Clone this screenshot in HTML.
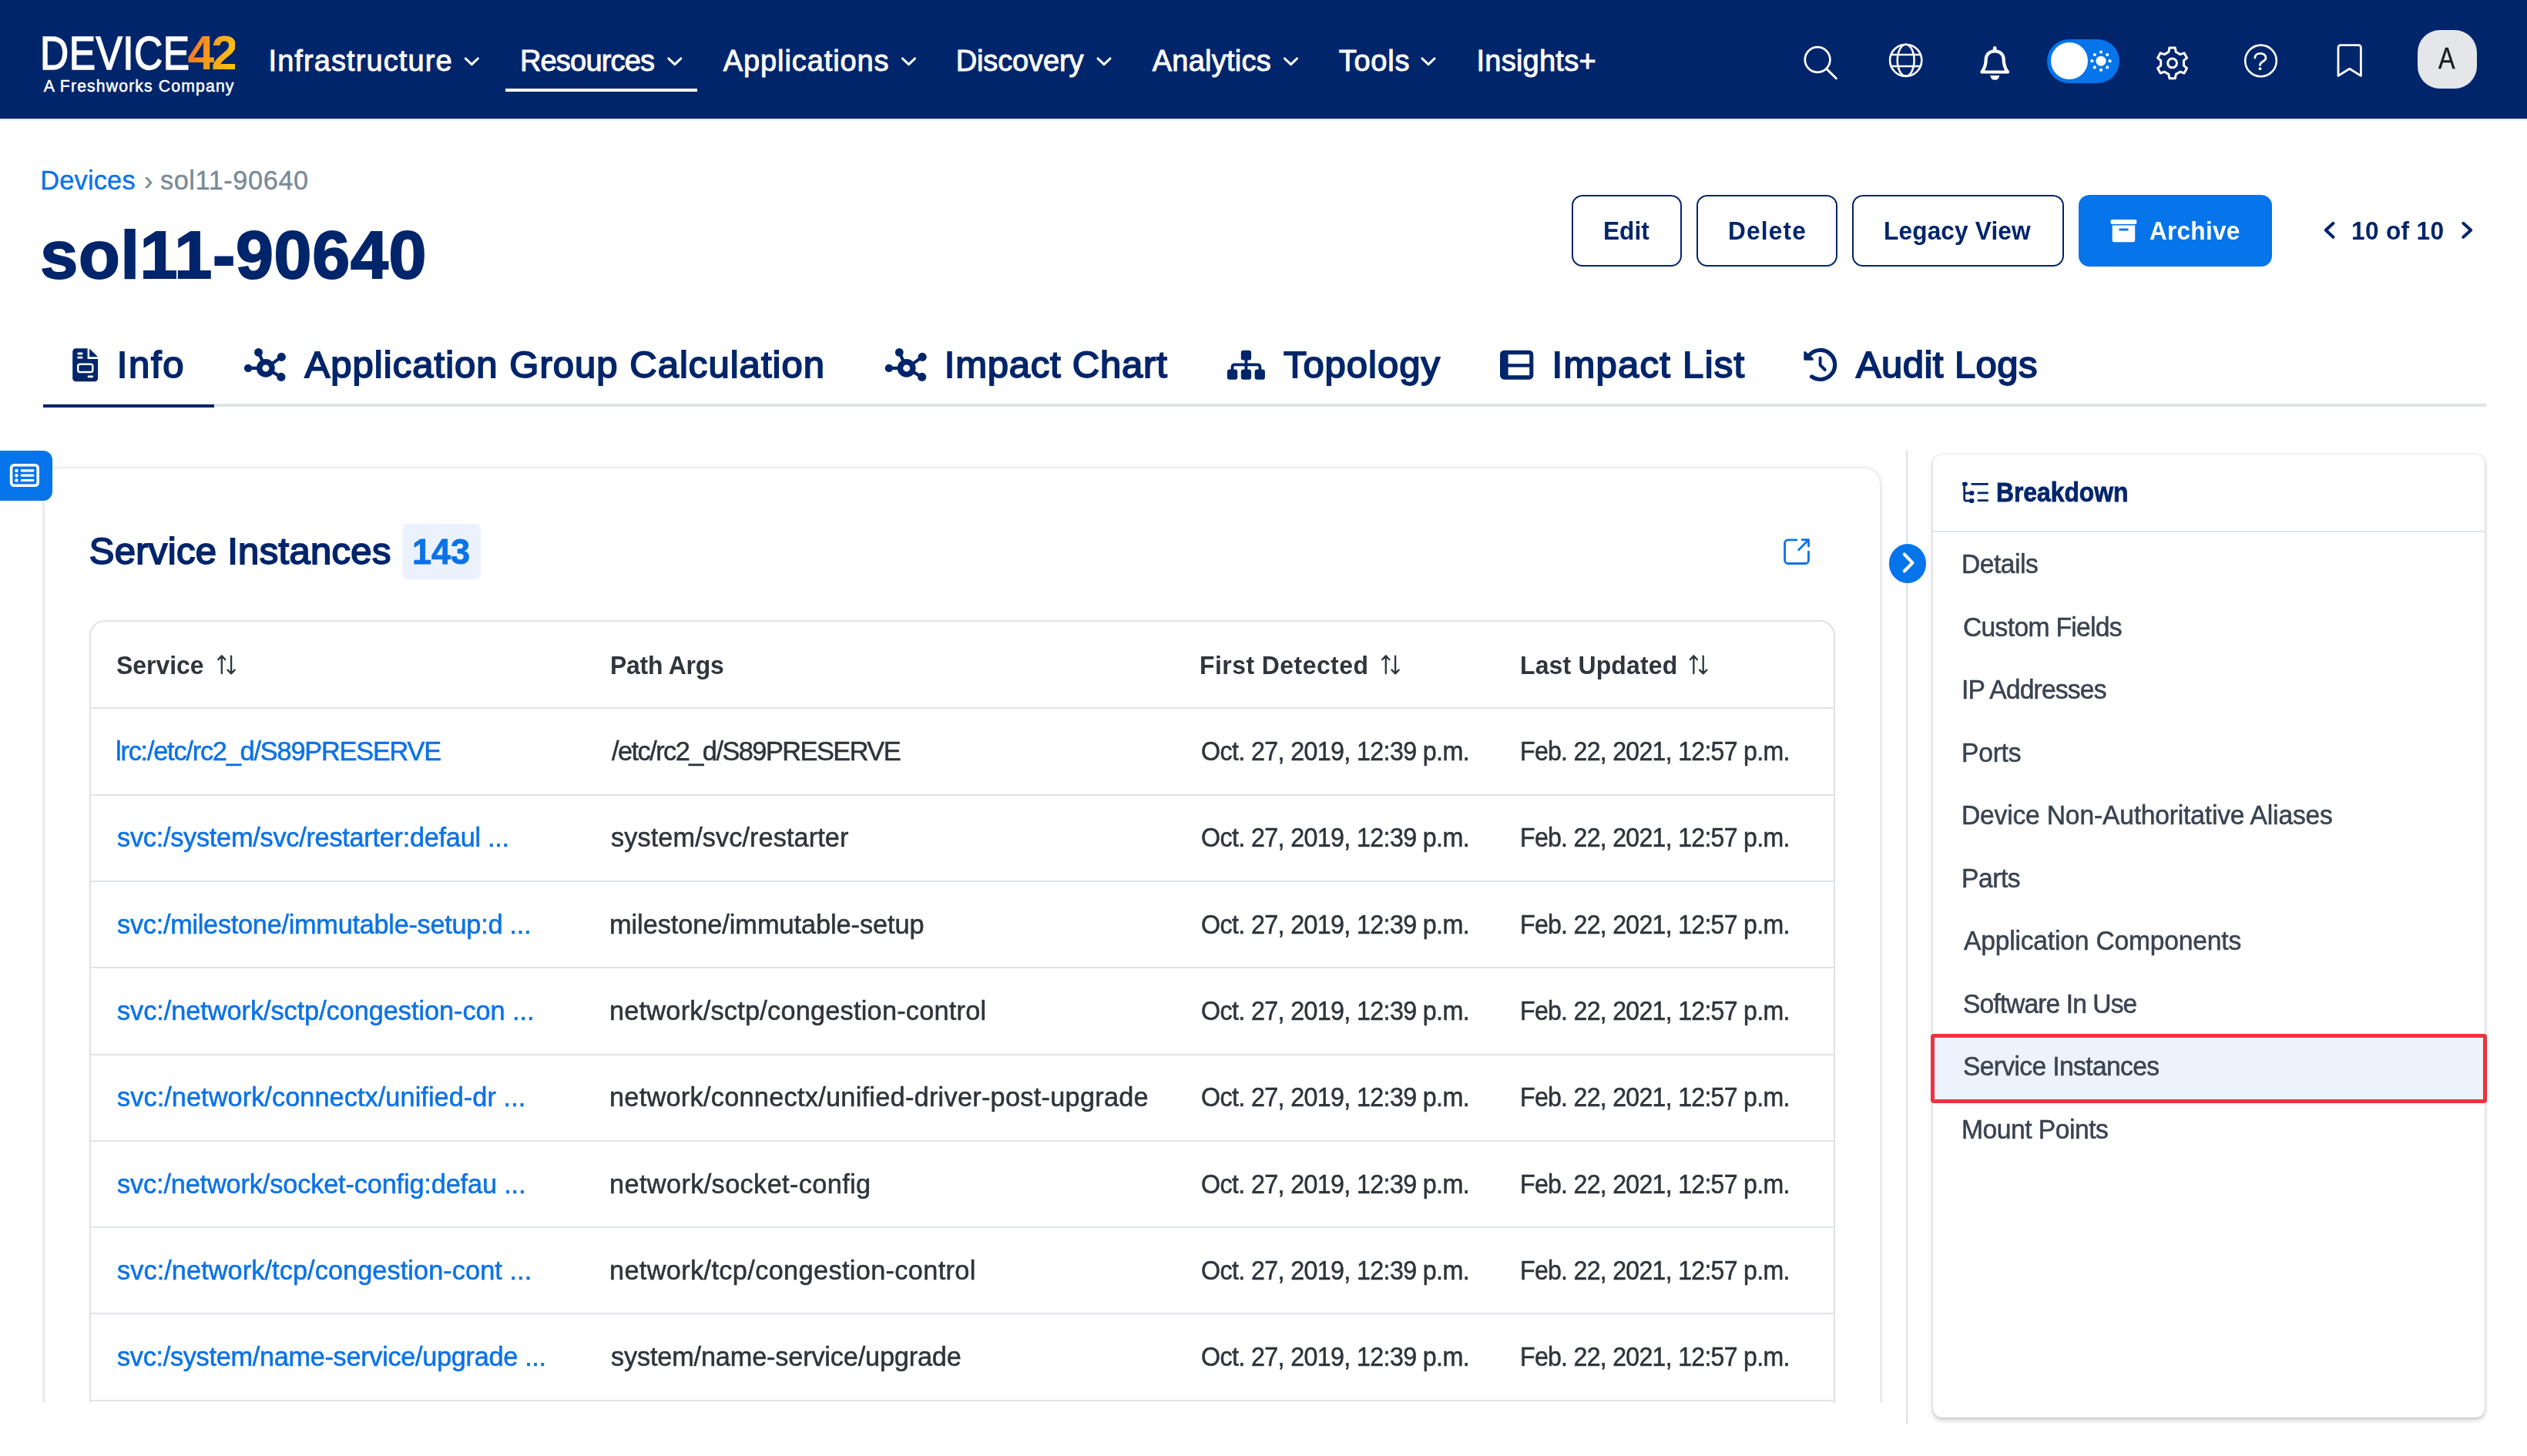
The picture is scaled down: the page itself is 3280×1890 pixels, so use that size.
<!DOCTYPE html>
<html lang="en">
<head>
<meta charset="utf-8">
<title>sol11-90640 - Device42</title>
<style>
*{box-sizing:border-box;margin:0;padding:0}
html,body{width:3280px;height:1890px;overflow:hidden;background:#fff}
body{position:relative;font-family:"Liberation Sans",sans-serif;color:#01256b}
.t{position:absolute;white-space:nowrap;line-height:1;display:block}
.abs{position:absolute}
a{text-decoration:none;cursor:pointer}
h1,h2,strong{font-weight:normal}
svg{position:absolute;overflow:visible}
#hdr{position:absolute;left:0;top:0;width:3280px;height:153.6px;background:#01256b;box-shadow:0 2.2px 0 #e3e5ea}
.lg{font-size:61.5px;color:#fff;-webkit-text-stroke:1.6px #fff}
.lg2{font-size:62.5px;font-weight:bold;background:linear-gradient(100deg,#ee7a25 8%,#f79a1c 45%,#ffc50f 95%);-webkit-background-clip:text;background-clip:text;color:transparent}
.lg3{font-size:21.2px;color:#fff;-webkit-text-stroke:.5px #fff}
.nav{font-size:38px;color:#fff;-webkit-text-stroke:.9px #fff}
.ava{font-size:38.5px;color:#1b1b1d;-webkit-text-stroke:.4px #1b1b1d}
.bc{font-size:34.3px;-webkit-text-stroke:.4px}.gr{color:#7a8a97}.lk{color:#0b72e7}
.ttl{font-size:88px;font-weight:bold;color:#01256b;-webkit-text-stroke:2px #01256b}
.btn{position:absolute;top:253px;height:93px;border:2.3px solid #01256b;border-radius:14px;background:#fff}
.btxt{font-size:34px;font-weight:bold;color:#01256b}.wh{color:#fff}
.tab{font-size:49px;color:#01256b;-webkit-text-stroke:1.85px #01256b}
.sih{font-size:49px;color:#01256b;-webkit-text-stroke:1.85px #01256b}
.sic{font-size:47px;font-weight:bold;color:#0b72e7;-webkit-text-stroke:.8px #0b72e7}
.th{font-size:33.6px;font-weight:bold;color:#2f353c}
.td{font-size:35.6px;color:#2f343b;-webkit-text-stroke:.55px #2f343b}.td.lk{color:#0b72e7;-webkit-text-stroke-color:#0b72e7}
.bdh{font-size:34.8px;font-weight:bold;color:#01256b;-webkit-text-stroke:.8px #01256b}
.sd{font-size:35.4px;color:#3a4350;-webkit-text-stroke:.55px #3a4350}
.rl{position:absolute;left:64px;width:2261.4px;height:2px;background:#e0e3e8}
</style>
</head>
<body>
<!-- ================= HEADER ================= -->
<div id="hdr">
  <span class="t lg" id="lg1" style="left:52.2px;top:37.9px;letter-spacing:0.6px;transform-origin:0 0;transform:scaleX(.836)">DEVICE</span>
  <span class="t lg2" id="lg2" style="left:243.6px;top:37.4px;letter-spacing:-4.2px">42</span>
  <span class="t lg3" id="lg3" style="left:56.7px;top:100.5px;letter-spacing:1.15px">A Freshworks Company</span>
  <a class="t nav" id="n1" style="left:348.5px;top:59.6px;letter-spacing:1.09px">Infrastructure</a>
  <a class="t nav" id="n2" style="left:674.9px;top:59.6px;letter-spacing:-0.8px">Resources</a>
  <a class="t nav" id="n3" style="left:938.7px;top:59.6px;letter-spacing:0.91px">Applications</a>
  <a class="t nav" id="n4" style="left:1240.7px;top:59.6px;letter-spacing:-0.12px">Discovery</a>
  <a class="t nav" id="n5" style="left:1495.7px;top:59.6px;letter-spacing:0.26px">Analytics</a>
  <a class="t nav" id="n6" style="left:1737.7px;top:59.6px;letter-spacing:0.75px">Tools</a>
  <a class="t nav" id="n7" style="left:1916.5px;top:59.6px;letter-spacing:0.24px">Insights+</a>
  <div class="abs" style="left:656px;top:115px;width:249px;height:4px;background:#fff"></div>
  <div class="abs" style="left:2657px;top:51px;width:94px;height:57px;border-radius:29px;background:#0674ea"></div>
  <div class="abs" style="left:2662px;top:55px;width:48px;height:48px;border-radius:50%;background:#fff"></div>
  <div class="abs" style="left:3138px;top:39px;width:77px;height:76px;border-radius:29px;background:#e5e6ea"></div>
  <span class="t ava" id="av" style="left:3164.6px;top:56.8px;transform-origin:0 0;transform:scaleX(.84)">A</span>
</div>

<!-- ================= BREADCRUMB + TITLE ================= -->
<a class="t bc lk" id="bc1" style="left:52.3px;top:216.9px;letter-spacing:0.21px">Devices</a>
<span class="t bc gr" id="bc2" style="left:186.9px;top:216.9px">›</span>
<span class="t bc gr" id="bc3" style="left:207.9px;top:216.9px;letter-spacing:0.6px">sol11-90640</span>
<h1 class="t ttl" id="ttl" style="left:52.3px;top:286.7px;letter-spacing:0.7px">sol11-90640</h1>

<!-- ================= BUTTONS ================= -->
<div class="btn" style="left:2040px;width:143px"></div>
<div class="btn" style="left:2202px;width:183px"></div>
<div class="btn" style="left:2404px;width:275px"></div>
<div class="btn" style="left:2698px;width:251px;background:#0674ea;border-color:#0674ea"></div>
<span class="t btxt" id="b1" style="left:2080.6px;top:281.7px;transform-origin:0 0;transform:scaleX(.93)">Edit</span>
<span class="t btxt" id="b2" style="left:2243.4px;top:281.7px;letter-spacing:1.26px;transform-origin:0 0;transform:scaleX(.93)">Delete</span>
<span class="t btxt" id="b3" style="left:2445.2px;top:281.7px;letter-spacing:0.15px;transform-origin:0 0;transform:scaleX(.93)">Legacy View</span>
<span class="t btxt wh" id="b4" style="left:2789.8px;top:281.7px;letter-spacing:0.23px;transform-origin:0 0;transform:scaleX(.93)">Archive</span>
<span class="t btxt" id="b5" style="left:3052.4px;top:281.7px;letter-spacing:0.36px;transform-origin:0 0;transform:scaleX(.93)">10 of 10</span>

<!-- ================= TABS ================= -->
<div class="abs" style="left:56px;top:524.1px;width:3171px;height:3.8px;background:#dfe3e8"></div>
<div class="abs" style="left:56px;top:524.7px;width:222px;height:4.1px;background:#01256b"></div>
<span class="t tab" id="t1" style="left:151.8px;top:449px;letter-spacing:1.67px">Info</span>
<span class="t tab" id="t2" style="left:395.6px;top:449px;letter-spacing:1.03px">Application Group Calculation</span>
<span class="t tab" id="t3" style="left:1225.8px;top:449px;letter-spacing:0.77px">Impact Chart</span>
<span class="t tab" id="t4" style="left:1665.9px;top:449px;letter-spacing:0.99px">Topology</span>
<span class="t tab" id="t5" style="left:2014.5px;top:449px;letter-spacing:1.28px">Impact List</span>
<span class="t tab" id="t6" style="left:2408.9px;top:449px;letter-spacing:0.45px">Audit Logs</span>

<!-- ================= MAIN CARD ================= -->
<div class="abs" id="mainclip" style="left:54.4px;top:560px;width:2416px;height:1260.5px;overflow:hidden">
 <div class="abs" id="card" style="left:3.5px;top:48px;width:2382px;height:1400px;border-radius:20px;background:#fff;box-shadow:0 1px 7px rgba(0,0,0,.2),0 0 2px rgba(0,0,0,.08)"></div>
 <div class="abs" id="tbl" style="left:62px;top:245.3px;width:2265.4px;height:1400px;border:2px solid #dfe2e7;border-radius:20px"></div>
 <div class="rl" style="top:358.3px"></div>
 <div class="rl" style="top:470.6px"></div>
 <div class="rl" style="top:582.9px"></div>
 <div class="rl" style="top:695.2px"></div>
 <div class="rl" style="top:807.5px"></div>
 <div class="rl" style="top:919.8px"></div>
 <div class="rl" style="top:1032.1px"></div>
 <div class="rl" style="top:1144.4px"></div>
 <div class="rl" style="top:1256.7px"></div>
</div>
<div class="abs" style="left:0;top:585px;width:68px;height:65px;border-radius:0 12px 12px 0;background:#0674ea"></div>
<h2 class="t sih" id="sih" style="left:115.7px;top:691px;letter-spacing:0.31px">Service Instances</h2>
<div class="abs" style="left:522px;top:680px;width:102px;height:72px;border-radius:7px;background:#ecf2fd"></div>
<span class="t sic" id="sic" style="left:535.2px;top:692.2px;letter-spacing:-0.1px;transform-origin:0 0;transform:scaleX(.96)">143</span>
<strong class="t th" id="h1" style="left:151.4px;top:846.6px;transform-origin:0 0;transform:scaleX(.95)">Service</strong>
<strong class="t th" id="h2" style="left:792.4px;top:846.6px;letter-spacing:-0.24px;transform-origin:0 0;transform:scaleX(.95)">Path Args</strong>
<strong class="t th" id="h3" style="left:1557.4px;top:846.6px;letter-spacing:0.5px;transform-origin:0 0;transform:scaleX(.95)">First Detected</strong>
<strong class="t th" id="h4" style="left:1972.6px;top:846.6px;letter-spacing:0.2px;transform-origin:0 0;transform:scaleX(.95)">Last Updated</strong>
<a class="t td lk" id="r0a" style="left:149.8px;top:958px;letter-spacing:-1.26px;transform-origin:0 0;transform:scaleX(.965)">lrc:/etc/rc2_d/S89PRESERVE</a>
<span class="t td" id="r0b" style="left:794.2px;top:958px;letter-spacing:-1.59px;transform-origin:0 0;transform:scaleX(.965)">/etc/rc2_d/S89PRESERVE</span>
<span class="t td" id="r0c" style="left:1558.7px;top:958px;letter-spacing:-0.68px;transform-origin:0 0;transform:scaleX(.905)">Oct. 27, 2019, 12:39 p.m.</span>
<span class="t td" id="r0d" style="left:1972.5px;top:958px;letter-spacing:-0.76px;transform-origin:0 0;transform:scaleX(.9)">Feb. 22, 2021, 12:57 p.m.</span>
<a class="t td lk" id="r1a" style="left:151.6px;top:1070.3px;letter-spacing:-0.29px;transform-origin:0 0;transform:scaleX(.965)">svc:/system/svc/restarter:defaul ...</a>
<span class="t td" id="r1b" style="left:793.2px;top:1070.3px;letter-spacing:0.07px;transform-origin:0 0;transform:scaleX(.965)">system/svc/restarter</span>
<span class="t td" id="r1c" style="left:1558.7px;top:1070.3px;letter-spacing:-0.68px;transform-origin:0 0;transform:scaleX(.905)">Oct. 27, 2019, 12:39 p.m.</span>
<span class="t td" id="r1d" style="left:1972.5px;top:1070.3px;letter-spacing:-0.76px;transform-origin:0 0;transform:scaleX(.9)">Feb. 22, 2021, 12:57 p.m.</span>
<a class="t td lk" id="r2a" style="left:151.6px;top:1182.6px;letter-spacing:-0.3px;transform-origin:0 0;transform:scaleX(.965)">svc:/milestone/immutable-setup:d ...</a>
<span class="t td" id="r2b" style="left:791.2px;top:1182.6px;letter-spacing:-0.07px;transform-origin:0 0;transform:scaleX(.965)">milestone/immutable-setup</span>
<span class="t td" id="r2c" style="left:1558.7px;top:1182.6px;letter-spacing:-0.68px;transform-origin:0 0;transform:scaleX(.905)">Oct. 27, 2019, 12:39 p.m.</span>
<span class="t td" id="r2d" style="left:1972.5px;top:1182.6px;letter-spacing:-0.76px;transform-origin:0 0;transform:scaleX(.9)">Feb. 22, 2021, 12:57 p.m.</span>
<a class="t td lk" id="r3a" style="left:151.6px;top:1294.9px;letter-spacing:-0.07px;transform-origin:0 0;transform:scaleX(.965)">svc:/network/sctp/congestion-con ...</a>
<span class="t td" id="r3b" style="left:791.2px;top:1294.9px;letter-spacing:0.22px;transform-origin:0 0;transform:scaleX(.965)">network/sctp/congestion-control</span>
<span class="t td" id="r3c" style="left:1558.7px;top:1294.9px;letter-spacing:-0.68px;transform-origin:0 0;transform:scaleX(.905)">Oct. 27, 2019, 12:39 p.m.</span>
<span class="t td" id="r3d" style="left:1972.5px;top:1294.9px;letter-spacing:-0.76px;transform-origin:0 0;transform:scaleX(.9)">Feb. 22, 2021, 12:57 p.m.</span>
<a class="t td lk" id="r4a" style="left:151.6px;top:1407.2px;letter-spacing:0.05px;transform-origin:0 0;transform:scaleX(.965)">svc:/network/connectx/unified-dr ...</a>
<span class="t td" id="r4b" style="left:791.2px;top:1407.2px;letter-spacing:0.26px;transform-origin:0 0;transform:scaleX(.965)">network/connectx/unified-driver-post-upgrade</span>
<span class="t td" id="r4c" style="left:1558.7px;top:1407.2px;letter-spacing:-0.68px;transform-origin:0 0;transform:scaleX(.905)">Oct. 27, 2019, 12:39 p.m.</span>
<span class="t td" id="r4d" style="left:1972.5px;top:1407.2px;letter-spacing:-0.76px;transform-origin:0 0;transform:scaleX(.9)">Feb. 22, 2021, 12:57 p.m.</span>
<a class="t td lk" id="r5a" style="left:151.6px;top:1519.5px;letter-spacing:-0.17px;transform-origin:0 0;transform:scaleX(.965)">svc:/network/socket-config:defau ...</a>
<span class="t td" id="r5b" style="left:791.2px;top:1519.5px;letter-spacing:0.37px;transform-origin:0 0;transform:scaleX(.965)">network/socket-config</span>
<span class="t td" id="r5c" style="left:1558.7px;top:1519.5px;letter-spacing:-0.68px;transform-origin:0 0;transform:scaleX(.905)">Oct. 27, 2019, 12:39 p.m.</span>
<span class="t td" id="r5d" style="left:1972.5px;top:1519.5px;letter-spacing:-0.76px;transform-origin:0 0;transform:scaleX(.9)">Feb. 22, 2021, 12:57 p.m.</span>
<a class="t td lk" id="r6a" style="left:151.6px;top:1631.8px;letter-spacing:0.06px;transform-origin:0 0;transform:scaleX(.965)">svc:/network/tcp/congestion-cont ...</a>
<span class="t td" id="r6b" style="left:791.2px;top:1631.8px;letter-spacing:0.35px;transform-origin:0 0;transform:scaleX(.965)">network/tcp/congestion-control</span>
<span class="t td" id="r6c" style="left:1558.7px;top:1631.8px;letter-spacing:-0.68px;transform-origin:0 0;transform:scaleX(.905)">Oct. 27, 2019, 12:39 p.m.</span>
<span class="t td" id="r6d" style="left:1972.5px;top:1631.8px;letter-spacing:-0.76px;transform-origin:0 0;transform:scaleX(.9)">Feb. 22, 2021, 12:57 p.m.</span>
<a class="t td lk" id="r7a" style="left:151.6px;top:1744.1px;letter-spacing:-0.34px;transform-origin:0 0;transform:scaleX(.965)">svc:/system/name-service/upgrade ...</a>
<span class="t td" id="r7b" style="left:793.2px;top:1744.1px;letter-spacing:-0.2px;transform-origin:0 0;transform:scaleX(.965)">system/name-service/upgrade</span>
<span class="t td" id="r7c" style="left:1558.7px;top:1744.1px;letter-spacing:-0.68px;transform-origin:0 0;transform:scaleX(.905)">Oct. 27, 2019, 12:39 p.m.</span>
<span class="t td" id="r7d" style="left:1972.5px;top:1744.1px;letter-spacing:-0.76px;transform-origin:0 0;transform:scaleX(.9)">Feb. 22, 2021, 12:57 p.m.</span>

<!-- ================= SIDE PANEL ================= -->
<div class="abs" style="left:2474px;top:585px;width:2px;height:1264px;background:#dcdfe6"></div>
<div class="abs" style="left:2452px;top:706.2px;width:48.4px;height:50.8px;border-radius:50%;background:#0674ea"></div>
<div class="abs" id="bcard" style="left:2509px;top:590px;width:716px;height:1249.8px;border-radius:12px;background:#fff;box-shadow:0 2.5px 6px rgba(0,0,0,.24),0 0 2px rgba(0,0,0,.1)"></div>
<div class="abs" style="left:2509px;top:689px;width:716px;height:2px;background:#dfe3e8"></div>
<h2 class="t bdh" id="bdh" style="left:2590.8px;top:622.2px;letter-spacing:-0.02px;transform-origin:0 0;transform:scaleX(.915)">Breakdown</h2>
<div class="abs" style="left:2506px;top:1342px;width:722px;height:90px;background:#edf3fc;border:5px solid #ee3340;border-radius:4px"></div>
<a class="t sd" id="s0" style="left:2546.4px;top:715.4px;letter-spacing:-0.53px;transform-origin:0 0;transform:scaleX(.95)">Details</a>
<a class="t sd" id="s1" style="left:2547.9px;top:796.9px;letter-spacing:-0.72px;transform-origin:0 0;transform:scaleX(.95)">Custom Fields</a>
<a class="t sd" id="s2" style="left:2546.4px;top:878.4px;letter-spacing:-0.86px;transform-origin:0 0;transform:scaleX(.95)">IP Addresses</a>
<a class="t sd" id="s3" style="left:2546.4px;top:959.9px;letter-spacing:-0.25px;transform-origin:0 0;transform:scaleX(.95)">Ports</a>
<a class="t sd" id="s4" style="left:2546.4px;top:1041.4px;letter-spacing:-0.2px;transform-origin:0 0;transform:scaleX(.95)">Device Non-Authoritative Aliases</a>
<a class="t sd" id="s5" style="left:2546.4px;top:1122.9px;letter-spacing:-0.5px;transform-origin:0 0;transform:scaleX(.95)">Parts</a>
<a class="t sd" id="s6" style="left:2548.9px;top:1204.4px;letter-spacing:-0.21px;transform-origin:0 0;transform:scaleX(.95)">Application Components</a>
<a class="t sd" id="s7" style="left:2547.9px;top:1285.9px;letter-spacing:-0.97px;transform-origin:0 0;transform:scaleX(.95)">Software In Use</a>
<a class="t sd" id="s8" style="left:2547.9px;top:1367.4px;letter-spacing:-0.68px;transform-origin:0 0;transform:scaleX(.95)">Service Instances</a>
<a class="t sd" id="s9" style="left:2546.4px;top:1448.9px;letter-spacing:-0.52px;transform-origin:0 0;transform:scaleX(.95)">Mount Points</a>

<!-- ================= ICONS ================= -->
<svg width="3280" height="1890" viewBox="0 0 3280 1890" style="left:0;top:0;pointer-events:none">
<g fill="none" stroke="#fff" stroke-width="3.1" stroke-linecap="round" stroke-linejoin="round">
<path d="M604.3 76l8 7.6 8-7.6"/>
<path d="M867.8 76l8 7.6 8-7.6"/>
<path d="M1171.5 76l8 7.6 8-7.6"/>
<path d="M1425 76l8 7.6 8-7.6"/>
<path d="M1667.5 76l8 7.6 8-7.6"/>
<path d="M1846 76l8 7.6 8-7.6"/>
</g>
<g fill="none" stroke="#fff" stroke-linecap="round" stroke-linejoin="round">
<circle cx="2359.1" cy="77.5" r="16.3" stroke-width="2.7"/><path d="M2371 89.6l12.4 12.2" stroke-width="2.9"/>
<g stroke-width="2.6"><circle cx="2473.7" cy="78.3" r="20.6"/><ellipse cx="2473.7" cy="78.3" rx="10.9" ry="20.6"/><path d="M2454.7 71h38M2454.7 86h38"/></g>
<path stroke-width="4.2" d="M2572.4 93.5C2576.5 88 2577.7 83.5 2577.7 77.5C2577.7 70.5 2582.5 66.3 2589.2 66.3C2595.9 66.3 2600.7 70.5 2600.7 77.5C2600.7 83.5 2601.9 88 2606 93.5Z"/><path stroke-width="4.6" d="M2589.2 62.3v2.5"/>
<path fill="#fff" stroke="none" d="M2583.4 98.1h11.8a5.9 5.7 0 0 1-11.8 0z"/>
<path stroke-width="3" d="M2824.3 67.4 L2823.3 62.0 L2815.9 62.0 L2814.9 67.4 L2809.4 70.6 L2804.2 68.8 L2800.6 75.2 L2804.7 78.7 L2804.7 85.1 L2800.6 88.6 L2804.2 95.0 L2809.4 93.2 L2814.9 96.4 L2815.9 101.8 L2823.3 101.8 L2824.3 96.4 L2829.8 93.2 L2835.0 95.0 L2838.6 88.6 L2834.5 85.1 L2834.5 78.7 L2838.6 75.2 L2835.0 68.8 L2829.8 70.6Z"/><circle cx="2819.6" cy="81.9" r="5.9" stroke-width="3"/>
<circle cx="2934.5" cy="78.9" r="20.3" stroke-width="2.6"/><path stroke-width="2.8" d="M2926.8 75C2926.8 71.5 2930 69.3 2933.9 69.3C2937.9 69.3 2941 71.7 2941 75.2C2941 80 2933.5 79.6 2933.5 84.6"/><circle cx="2933.5" cy="89.2" r="1.9" fill="#fff" stroke="none"/>
<path stroke-width="2.8" d="M3035 98.4V61.7a3 3 0 0 1 3-3h23.4a3 3 0 0 1 3 3V98.4L3049.7 89.3Z"/>
</g>
<g fill="#fff"><circle cx="2727" cy="79.2" r="6.5"/><circle cx="2738.6" cy="79.2" r="2.1"/><circle cx="2735.2" cy="87.4" r="2.1"/><circle cx="2727.0" cy="90.8" r="2.1"/><circle cx="2718.8" cy="87.4" r="2.1"/><circle cx="2715.4" cy="79.2" r="2.1"/><circle cx="2718.8" cy="71.0" r="2.1"/><circle cx="2727.0" cy="67.6" r="2.1"/><circle cx="2735.2" cy="71.0" r="2.1"/></g>
<g fill="#fff"><rect x="2739.6" y="284.9" width="33.7" height="6" rx="1.6"/><path d="M2741.7 292.4h29.5v19.3a2.5 2.5 0 0 1-2.5 2.5h-24.5a2.5 2.5 0 0 1-2.5-2.5z"/></g><rect x="2750.3" y="296.6" width="12.4" height="2.8" rx="1.4" fill="#0674ea"/>
<g fill="none" stroke="#01256b" stroke-width="4" stroke-linecap="round" stroke-linejoin="round"><path d="M3028.5 289.8l-9.7 9 9.7 9"/><path d="M3197.3 289.8l9.9 9-9.9 9"/></g>
<g fill="#01256b"><path d="M94.2 456.5a4.3 4.3 0 0 1 4.3-4.3h15.1v13.9h13.5v24.8a4.3 4.3 0 0 1-4.3 4.3h-24.3a4.3 4.3 0 0 1-4.3-4.3z"/><path d="M116.1 452.5l11 10.7h-11z"/></g>
<g fill="#fff"><rect x="100.3" y="457.5" width="7.3" height="2.9" rx="1.4"/><rect x="100.3" y="462.7" width="7.3" height="2.9" rx="1.4"/><rect x="113.6" y="487.4" width="7.6" height="2.8" rx="1.4"/></g><rect x="101.2" y="472.7" width="19.1" height="10.3" rx="2.6" fill="none" stroke="#fff" stroke-width="2.4"/>
<g stroke="#01256b" stroke-width="4.2" stroke-linecap="round" fill="none"><path d="M344.9 477.9L335.5 457.4"/><path d="M344.9 477.9L365.3 463.4"/><path d="M344.9 477.9L322.1 477.9"/><path d="M344.9 477.9L364.9 489.4"/><circle cx="344.9" cy="477.9" r="8.2" stroke-width="7.4" fill="#fff"/></g><g fill="#01256b"><circle cx="335.5" cy="457.4" r="5.4"/><circle cx="365.3" cy="463.4" r="5.6"/><circle cx="322.1" cy="477.9" r="5.2"/><circle cx="364.9" cy="489.4" r="5.6"/></g>
<g stroke="#01256b" stroke-width="4.2" stroke-linecap="round" fill="none"><path d="M1176.7 477.9L1167.3 457.4"/><path d="M1176.7 477.9L1197.1 463.4"/><path d="M1176.7 477.9L1153.9 477.9"/><path d="M1176.7 477.9L1196.7 489.4"/><circle cx="1176.7" cy="477.9" r="8.2" stroke-width="7.4" fill="#fff"/></g><g fill="#01256b"><circle cx="1167.3" cy="457.4" r="5.4"/><circle cx="1197.1" cy="463.4" r="5.6"/><circle cx="1153.9" cy="477.9" r="5.2"/><circle cx="1196.7" cy="489.4" r="5.6"/></g>
<g fill="#01256b"><rect x="1610.8" y="454.7" width="13.3" height="12.9" rx="3.2"/><rect x="1592.9" y="479.4" width="13.3" height="13.3" rx="3.2"/><rect x="1610.8" y="479.4" width="13.3" height="13.3" rx="3.2"/><rect x="1628.6" y="479.4" width="13.3" height="13.3" rx="3.2"/></g><path fill="none" stroke="#01256b" stroke-width="3.8" d="M1617.45 466v15M1599.55 481v-5a2.7 2.7 0 0 1 2.7-2.7h30.4a2.7 2.7 0 0 1 2.7 2.7v5"/>
<rect x="1947" y="454.7" width="43.3" height="38" rx="5.5" fill="#01256b"/><rect x="1957.6" y="460.2" width="27.6" height="12" fill="#fff"/><rect x="1957.6" y="476.6" width="27.6" height="10.6" fill="#fff"/>
<g fill="none" stroke="#01256b" stroke-linecap="round" stroke-linejoin="round"><path stroke-width="5.2" d="M2349.5 459.8A19 19 0 1 1 2351.6 488.9"/><path stroke-width="3.9" d="M2362.6 464.4v9.4l6.2 6.2"/><path fill="#01256b" stroke-width="3.2" d="M2342.9 457.6v8.6h9.4z"/></g>
<rect x="14.6" y="603.8" width="34.6" height="26.4" rx="3.6" fill="none" stroke="#fff" stroke-width="3.6"/><g fill="#fff"><circle cx="21.4" cy="610.9" r="2.2"/><rect x="26.8" y="609.3" width="17.5" height="3.2" rx="1.2"/><circle cx="21.4" cy="617.2" r="2.2"/><rect x="26.8" y="615.6" width="17.5" height="3.2" rx="1.2"/><circle cx="21.4" cy="623.5" r="2.2"/><rect x="26.8" y="621.9" width="17.5" height="3.2" rx="1.2"/></g>
<g fill="none" stroke="#0b72e7" stroke-width="2.8" stroke-linecap="round" stroke-linejoin="round"><path d="M2331.9 700.9h-11a4.3 4.3 0 0 0-4.3 4.3v22a4.3 4.3 0 0 0 4.3 4.3h22.3a4.3 4.3 0 0 0 4.3-4.3v-11"/><path d="M2334.7 713.8l12.6-13M2339.2 700.7h8.3v8.4"/></g>
<g fill="none" stroke="#2f353c" stroke-width="2.3" stroke-linecap="round" stroke-linejoin="round"><path d="M287.8 874.2v-22.6M283.2 856.2l4.6-4.9 4.6 4.9M300.1 851.6v22.6M295.5 869.6l4.6 4.9 4.6-4.9"/><path d="M1798.8 874.2v-22.6M1794.2 856.2l4.6-4.9 4.6 4.9M1811.1 851.6v22.6M1806.5 869.6l4.6 4.9 4.6-4.9"/><path d="M2198.4 874.2v-22.6M2193.8 856.2l4.6-4.9 4.6 4.9M2210.7 851.6v22.6M2206.1 869.6l4.6 4.9 4.6-4.9"/></g>
<g fill="#01256b"><rect x="2547" y="625.7" width="6.8" height="5" rx="1.8"/><rect x="2556" y="637.3" width="6.4" height="5.6" rx="1.8"/><rect x="2556" y="647.2" width="6.4" height="5.7" rx="1.8"/></g><g fill="none" stroke="#01256b" stroke-width="2.7" stroke-linecap="round" stroke-linejoin="round"><path d="M2549.7 629v18.8a2.3 2.3 0 0 0 2.3 2.3h5M2549.7 640.1h7M2559.6 628.3h20.1M2567.9 639.8h11.8M2567.9 649.7h11.8"/></g>
<path d="M2471.9 719.6l10.6 11-10.6 10.6" fill="none" stroke="#fff" stroke-width="4.2" stroke-linecap="round" stroke-linejoin="round"/>
</svg>

</body>
</html>
